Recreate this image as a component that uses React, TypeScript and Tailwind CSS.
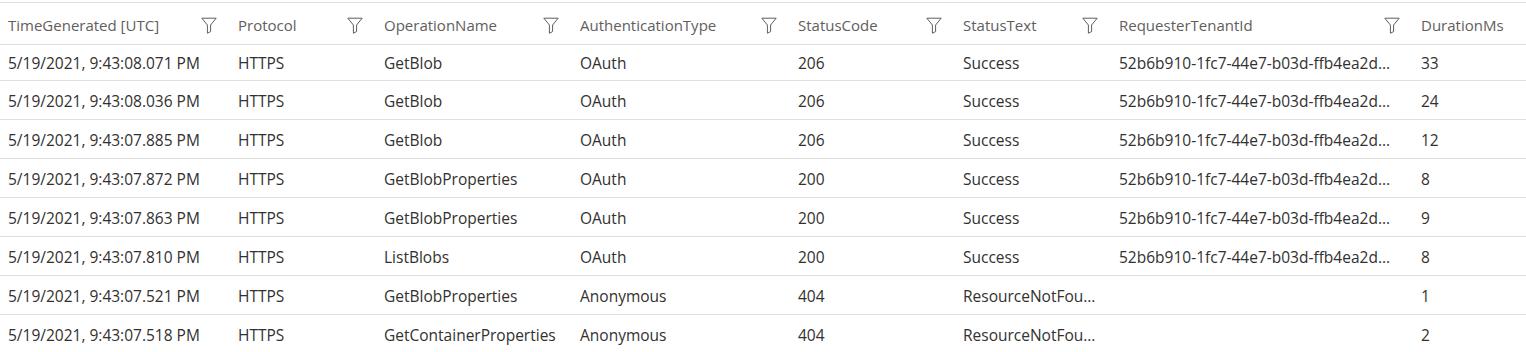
import React from "react";

const cols = [
  { name: "TimeGenerated [UTC]", w: "w-[230px]", filter: true },
  { name: "Protocol", w: "w-[146px]", filter: true },
  { name: "OperationName", w: "w-[196px]", filter: true },
  { name: "AuthenticationType", w: "w-[218px]", filter: true },
  { name: "StatusCode", w: "w-[165px]", filter: true },
  { name: "StatusText", w: "w-[156px]", filter: true },
  { name: "RequesterTenantId", w: "w-[302px]", filter: true },
  { name: "DurationMs", w: "flex-1", filter: false },
];

const tenant = "52b6b910-1fc7-44e7-b03d-ffb4ea2d…";

const rows: string[][] = [
  ["5/19/2021, 9:43:08.071 PM", "HTTPS", "GetBlob", "OAuth", "206", "Success", tenant, "33"],
  ["5/19/2021, 9:43:08.036 PM", "HTTPS", "GetBlob", "OAuth", "206", "Success", tenant, "24"],
  ["5/19/2021, 9:43:07.885 PM", "HTTPS", "GetBlob", "OAuth", "206", "Success", tenant, "12"],
  ["5/19/2021, 9:43:07.872 PM", "HTTPS", "GetBlobProperties", "OAuth", "200", "Success", tenant, "8"],
  ["5/19/2021, 9:43:07.863 PM", "HTTPS", "GetBlobProperties", "OAuth", "200", "Success", tenant, "9"],
  ["5/19/2021, 9:43:07.810 PM", "HTTPS", "ListBlobs", "OAuth", "200", "Success", tenant, "8"],
  ["5/19/2021, 9:43:07.521 PM", "HTTPS", "GetBlobProperties", "Anonymous", "404", "ResourceNotFou…", "", "1"],
  ["5/19/2021, 9:43:07.518 PM", "HTTPS", "GetContainerProperties", "Anonymous", "404", "ResourceNotFou…", "", "2"],
];

function Funnel() {
  return (
    <svg width="16" height="17" viewBox="0 0 16 17" fill="none" className="shrink-0">
      <path
        d="M0.8 1.2 H15.2 L9.6 8 V14.6 L6.4 16.2 V8 Z"
        stroke="#605e5c"
        strokeWidth="1"
        strokeLinejoin="round"
      />
    </svg>
  );
}

export default function App() {
  return (
    <div
      className="w-[1526px] h-[352px] overflow-hidden bg-white pt-[2px]"
      style={{ fontFamily: '"Segoe UI", "Open Sans", "Noto Sans", sans-serif' }}
    >
      <div className="flex h-[43px] border-t border-b border-[#e1dfdd] items-center pt-[3px]">
        {cols.map((c) => (
          <div key={c.name} className={`${c.w} flex items-center justify-between pl-2 pr-[13px]`}>
            <span className="text-[15px] text-[#605e5c] whitespace-nowrap">{c.name}</span>
            {c.filter && <Funnel />}
          </div>
        ))}
      </div>
      {rows.map((r, i) => (
        <div
          key={i}
          className={`flex items-center border-b border-[#e1dfdd] pt-[3px] ${i === 0 ? "h-[36px]" : "h-[39px]"}`}
        >
          {r.map((v, j) => (
            <div
              key={j}
              className={`${cols[j].w} pl-2 text-[15.5px] font-medium text-[#323130] whitespace-nowrap overflow-hidden`}
            >
              {v}
            </div>
          ))}
        </div>
      ))}
    </div>
  );
}
